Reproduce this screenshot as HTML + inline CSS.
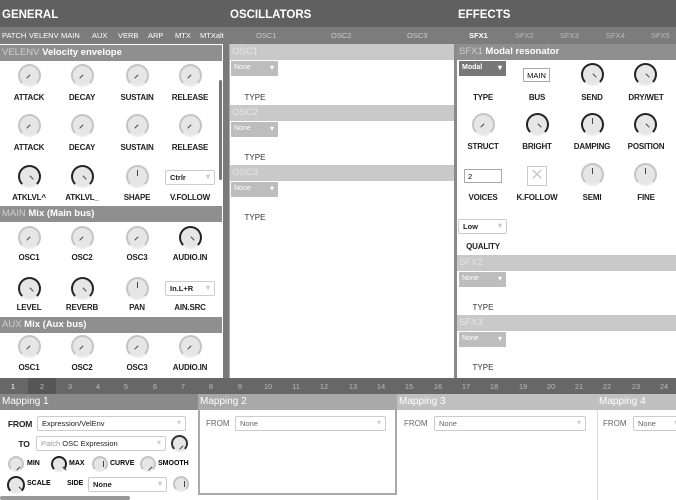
<!DOCTYPE html><html><head><meta charset="utf-8"><style>
*{margin:0;padding:0;box-sizing:border-box}
body{width:676px;height:500px;overflow:hidden;background:#fff;font-family:"Liberation Sans",sans-serif;position:relative}
.a{position:absolute}
.hd{background:#606060;color:#fff;font-weight:bold;font-size:12px}
.tb{background:#7c7c7c;color:#e8e8e8;font-size:7.5px}
.sec{background:#8f8f8f;color:#fff;font-weight:bold;font-size:9.5px;padding:2px 0 0 2px;height:16px}
.sec span{color:#cfcfcf;font-weight:normal}
.sl{background:#c9c9c9;color:#e6e6e6;font-size:9.5px;padding:2px 0 0 2px;height:16px}
.lb{position:absolute;font-size:8px;font-weight:bold;color:#222;transform:translateX(-50%);white-space:nowrap;letter-spacing:-0.2px}
.lt{position:absolute;font-size:8px;color:#333;transform:translateX(-50%)}
.k{position:absolute;width:23px;height:23px;margin:-2px 0 0 -1.5px;border-radius:50%;background:#e6e6e6;border:2px solid #c4c4c4;border-bottom-color:#ececec}
.k.b{border-color:#222;border-bottom-color:#ececec}
.k::after{content:"";position:absolute;left:6px;top:10px;width:5px;height:1.3px;background:#444;transform:rotate(-45deg)}
.k.b::after{left:9px;transform:rotate(45deg)}
.k.m::after{left:9px;top:3px;width:1.3px;height:6px;transform:none}
.dd{position:absolute;background:#bdbdbd;color:#fff;font-size:7px;padding:3px 0 0 3px;height:15px;width:47px}
.dd::after{content:"▾";position:absolute;right:4px;top:2px;font-size:8px}
.sel{position:absolute;border:1px solid #ccc;background:#fff;font-size:7.5px;color:#222;padding:2px 0 0 4px;height:15px;border-radius:2px}
.sel::after{content:"▾";position:absolute;right:4px;top:1px;color:#ccc;font-size:8px}
.mh{position:absolute;color:#fff;font-size:10px;padding:2px 0 0 2px;height:16px}
.ml{position:absolute;font-size:8px;color:#666}
</style></head><body>
<div class="a hd" style="left:0;top:0;width:676px;height:27px"></div>
<div class="a" style="left:2px;top:9px;color:#fff;font-weight:bold;font-size:11.5px">GENERAL</div>
<div class="a" style="left:230px;top:9px;color:#fff;font-weight:bold;font-size:11.5px">OSCILLATORS</div>
<div class="a" style="left:458px;top:9px;color:#fff;font-weight:bold;font-size:11.5px">EFFECTS</div>
<div class="a tb" style="left:0;top:27px;width:676px;height:17px"></div>
<div class="a" style="left:2px;top:31px;font-size:7.5px;color:#fff">PATCH</div>
<div class="a" style="left:29px;top:31px;font-size:7.5px;color:#fff">VELENV</div>
<div class="a" style="left:61px;top:31px;font-size:7.5px;color:#fff">MAIN</div>
<div class="a" style="left:92px;top:31px;font-size:7.5px;color:#fff">AUX</div>
<div class="a" style="left:118px;top:31px;font-size:7.5px;color:#fff">VERB</div>
<div class="a" style="left:148px;top:31px;font-size:7.5px;color:#fff">ARP</div>
<div class="a" style="left:175px;top:31px;font-size:7.5px;color:#fff">MTX</div>
<div class="a" style="left:200px;top:31px;font-size:7.5px;color:#fff">MTXalt</div>
<div class="a" style="left:256px;top:31px;font-size:7.5px;color:#ccc">OSC1</div>
<div class="a" style="left:331px;top:31px;font-size:7.5px;color:#ccc">OSC2</div>
<div class="a" style="left:407px;top:31px;font-size:7.5px;color:#ccc">OSC3</div>
<div class="a" style="left:469px;top:31px;font-size:7.5px;color:#fff;font-weight:bold">SFX1</div>
<div class="a" style="left:515px;top:31px;font-size:7.5px;color:#bbb">SFX2</div>
<div class="a" style="left:560px;top:31px;font-size:7.5px;color:#bbb">SFX3</div>
<div class="a" style="left:606px;top:31px;font-size:7.5px;color:#bbb">SFX4</div>
<div class="a" style="left:651px;top:31px;font-size:7.5px;color:#bbb">SFX5</div>
<div class="a" style="left:223px;top:44px;width:6px;height:334px;background:#7a7a7a"></div>
<div class="a" style="left:229px;top:44px;width:1px;height:334px;background:#aaa"></div>
<div class="a" style="left:454px;top:44px;width:3px;height:334px;background:#8a8a8a"></div>
<div class="a" style="left:219px;top:80px;width:3px;height:100px;background:#777;border-radius:2px"></div>

<div class="a sec" style="left:0;top:45px;width:222px"><span>VELENV</span> Velocity envelope</div>
<div class="k" style="left:19px;top:66px"></div><div class="k" style="left:72px;top:66px"></div><div class="k" style="left:127px;top:66px"></div><div class="k" style="left:180px;top:66px"></div>
<div class="lb" style="left:29px;top:93px">ATTACK</div><div class="lb" style="left:82px;top:93px">DECAY</div><div class="lb" style="left:137px;top:93px">SUSTAIN</div><div class="lb" style="left:190px;top:93px">RELEASE</div>
<div class="k" style="left:19px;top:116px"></div><div class="k" style="left:72px;top:116px"></div><div class="k" style="left:127px;top:116px"></div><div class="k" style="left:180px;top:116px"></div>
<div class="lb" style="left:29px;top:143px">ATTACK</div><div class="lb" style="left:82px;top:143px">DECAY</div><div class="lb" style="left:137px;top:143px">SUSTAIN</div><div class="lb" style="left:190px;top:143px">RELEASE</div>
<div class="k b" style="left:19px;top:167px"></div><div class="k b" style="left:72px;top:167px"></div><div class="k m" style="left:127px;top:167px"></div>
<div class="sel" style="left:165px;top:170px;width:50px;font-weight:bold">Ctrlr</div>
<div class="lb" style="left:29px;top:193px">ATKLVL^</div><div class="lb" style="left:82px;top:193px">ATKLVL_</div><div class="lb" style="left:137px;top:193px">SHAPE</div><div class="lb" style="left:190px;top:193px">V.FOLLOW</div>
<div class="a sec" style="left:0;top:206px;width:222px"><span>MAIN</span> Mix (Main bus)</div>
<div class="k" style="left:19px;top:228px"></div><div class="k" style="left:72px;top:228px"></div><div class="k" style="left:127px;top:228px"></div><div class="k b" style="left:180px;top:228px"></div>
<div class="lb" style="left:29px;top:253px">OSC1</div><div class="lb" style="left:82px;top:253px">OSC2</div><div class="lb" style="left:137px;top:253px">OSC3</div><div class="lb" style="left:190px;top:253px">AUDIO.IN</div>
<div class="k b" style="left:19px;top:279px"></div><div class="k b" style="left:72px;top:279px"></div><div class="k m" style="left:127px;top:279px"></div>
<div class="sel" style="left:165px;top:281px;width:50px;font-weight:bold">In.L+R</div>
<div class="lb" style="left:29px;top:303px">LEVEL</div><div class="lb" style="left:82px;top:303px">REVERB</div><div class="lb" style="left:137px;top:303px">PAN</div><div class="lb" style="left:190px;top:303px">AIN.SRC</div>
<div class="a sec" style="left:0;top:317px;width:222px"><span>AUX</span> Mix (Aux bus)</div>
<div class="k" style="left:19px;top:337px"></div><div class="k" style="left:72px;top:337px"></div><div class="k" style="left:127px;top:337px"></div><div class="k" style="left:180px;top:337px"></div>
<div class="lb" style="left:29px;top:363px">OSC1</div><div class="lb" style="left:82px;top:363px">OSC2</div><div class="lb" style="left:137px;top:363px">OSC3</div><div class="lb" style="left:190px;top:363px">AUDIO.IN</div>

<div class="a sl" style="left:230px;top:44px;width:224px">OSC1</div>
<div class="dd" style="left:231px;top:61px">None</div><div class="lt" style="left:255px;top:93px">TYPE</div>
<div class="a sl" style="left:230px;top:105px;width:224px">OSC2</div>
<div class="dd" style="left:231px;top:122px">None</div><div class="lt" style="left:255px;top:153px">TYPE</div>
<div class="a sl" style="left:230px;top:165px;width:224px">OSC3</div>
<div class="dd" style="left:231px;top:182px">None</div><div class="lt" style="left:255px;top:213px">TYPE</div>

<div class="a sec" style="left:457px;top:44px;width:219px"><span>SFX1</span> Modal resonator</div>
<div class="dd" style="left:459px;top:61px;background:#777;font-weight:bold">Modal</div>
<div class="a" style="left:523px;top:68px;width:27px;height:14px;border:1px solid #aaa;font-size:7.5px;text-align:center;padding-top:2px">MAIN</div>
<div class="k b" style="left:582px;top:65px"></div><div class="k b" style="left:635px;top:65px"></div>
<div class="lb" style="left:483px;top:93px">TYPE</div><div class="lb" style="left:537px;top:93px">BUS</div><div class="lb" style="left:592px;top:93px">SEND</div><div class="lb" style="left:646px;top:93px">DRY/WET</div>
<div class="k" style="left:473px;top:115px"></div><div class="k b" style="left:527px;top:115px"></div><div class="k b m" style="left:582px;top:115px"></div><div class="k b" style="left:635px;top:115px"></div>
<div class="lb" style="left:483px;top:142px">STRUCT</div><div class="lb" style="left:537px;top:142px">BRIGHT</div><div class="lb" style="left:592px;top:142px">DAMPING</div><div class="lb" style="left:646px;top:142px">POSITION</div>
<div class="a" style="left:464px;top:169px;width:38px;height:14px;border:1px solid #aaa;font-size:7.5px;padding:2px 0 0 3px">2</div>
<div class="a" style="left:527px;top:166px;width:20px;height:20px;border:1px solid #ccc;color:#ccc;font-size:16px;text-align:center;line-height:18px">✕</div>
<div class="k m" style="left:582px;top:165px"></div><div class="k m" style="left:635px;top:165px"></div>
<div class="lb" style="left:483px;top:193px">VOICES</div><div class="lb" style="left:537px;top:193px">K.FOLLOW</div><div class="lb" style="left:592px;top:193px">SEMI</div><div class="lb" style="left:646px;top:193px">FINE</div>
<div class="sel" style="left:458px;top:219px;width:49px;font-weight:bold">Low</div>
<div class="lb" style="left:483px;top:242px">QUALITY</div>
<div class="a sl" style="left:457px;top:255px;width:219px">SFX2</div>
<div class="dd" style="left:459px;top:272px">None</div><div class="lt" style="left:483px;top:303px">TYPE</div>
<div class="a sl" style="left:457px;top:315px;width:219px">SFX3</div>
<div class="dd" style="left:459px;top:332px">None</div><div class="lt" style="left:483px;top:363px">TYPE</div>

<div class="a" style="left:0;top:378px;width:676px;height:16px;background:#676767"></div>
<div class="a" style="left:28px;top:378px;width:28px;height:16px;background:#565656"></div>
<div class="a" style="left:0;top:382px;width:676px;height:10px;font-size:7.5px;color:#bbb">
<span class="a" style="left:13px;color:#fff;transform:translateX(-50%)">1</span><span class="a" style="left:42px;transform:translateX(-50%)">2</span><span class="a" style="left:70px;transform:translateX(-50%)">3</span><span class="a" style="left:98px;transform:translateX(-50%)">4</span><span class="a" style="left:126px;transform:translateX(-50%)">5</span><span class="a" style="left:155px;transform:translateX(-50%)">6</span><span class="a" style="left:183px;transform:translateX(-50%)">7</span><span class="a" style="left:211px;transform:translateX(-50%)">8</span><span class="a" style="left:240px;transform:translateX(-50%)">9</span><span class="a" style="left:268px;transform:translateX(-50%)">10</span><span class="a" style="left:296px;transform:translateX(-50%)">11</span><span class="a" style="left:324px;transform:translateX(-50%)">12</span><span class="a" style="left:353px;transform:translateX(-50%)">13</span><span class="a" style="left:381px;transform:translateX(-50%)">14</span><span class="a" style="left:409px;transform:translateX(-50%)">15</span><span class="a" style="left:438px;transform:translateX(-50%)">16</span><span class="a" style="left:466px;transform:translateX(-50%)">17</span><span class="a" style="left:494px;transform:translateX(-50%)">18</span><span class="a" style="left:523px;transform:translateX(-50%)">19</span><span class="a" style="left:551px;transform:translateX(-50%)">20</span><span class="a" style="left:579px;transform:translateX(-50%)">21</span><span class="a" style="left:607px;transform:translateX(-50%)">22</span><span class="a" style="left:636px;transform:translateX(-50%)">23</span><span class="a" style="left:664px;transform:translateX(-50%)">24</span></div>

<div class="mh" style="left:0;top:394px;width:198px;background:#8a8a8a">Mapping 1</div>
<div class="a" style="left:198px;top:394px;width:199px;height:101px;border:2px solid #aaa;border-top:none"></div>
<div class="mh" style="left:198px;top:394px;width:199px;background:#a9a9a9">Mapping 2</div>
<div class="mh" style="left:397px;top:394px;width:200px;background:#c0c0c0">Mapping 3</div>
<div class="a" style="left:597px;top:410px;width:1px;height:90px;background:#ddd"></div>
<div class="mh" style="left:597px;top:394px;width:79px;background:#c0c0c0">Mapping 4</div>
<div class="lb" style="left:20px;top:419px;font-size:8.5px">FROM</div>
<div class="sel" style="left:37px;top:416px;width:149px">Expression/VelEnv</div>
<div class="lb" style="left:24px;top:439px;font-size:8.5px">TO</div>
<div class="sel" style="left:36px;top:436px;width:130px"><span style="color:#999">Patch</span> OSC Expression</div>
<div class="k" style="left:171px;top:435px;width:17px;height:17px;margin:0;border-color:#333;border-bottom-color:#e9e9e9"></div>
<div class="k" style="left:8px;top:456px;width:16px;height:16px;margin:0"></div><div class="a" style="left:27px;top:460px;font-size:7px;font-weight:bold">MIN</div>
<div class="k b" style="left:51px;top:456px;width:16px;height:16px;margin:0"></div><div class="a" style="left:69px;top:460px;font-size:7px;font-weight:bold">MAX</div>
<div class="k m" style="left:92px;top:456px;width:16px;height:16px;margin:0"></div><div class="a" style="left:110px;top:460px;font-size:7px;font-weight:bold">CURVE</div>
<div class="k" style="left:140px;top:456px;width:16px;height:16px;margin:0"></div><div class="a" style="left:158px;top:460px;font-size:7px;font-weight:bold">SMOOTH</div>
<div class="k b" style="left:7px;top:476px;width:18px;height:18px;margin:0"></div><div class="a" style="left:27px;top:480px;font-size:7px;font-weight:bold">SCALE</div>
<div class="a" style="left:67px;top:480px;font-size:7px;font-weight:bold">SIDE</div>
<div class="sel" style="left:88px;top:477px;width:79px;font-weight:bold">None</div>
<div class="k m" style="left:173px;top:476px;width:16px;height:16px;margin:0"></div>
<div class="a" style="left:0;top:496px;width:130px;height:4px;background:#999;border-radius:2px"></div>
<div class="ml" style="left:206px;top:419px">FROM</div><div class="sel" style="left:235px;top:416px;width:151px;color:#666">None</div>
<div class="ml" style="left:404px;top:419px">FROM</div><div class="sel" style="left:434px;top:416px;width:152px;color:#666">None</div>
<div class="ml" style="left:603px;top:419px">FROM</div><div class="sel" style="left:633px;top:416px;width:50px;color:#666">None</div>
</body></html>
